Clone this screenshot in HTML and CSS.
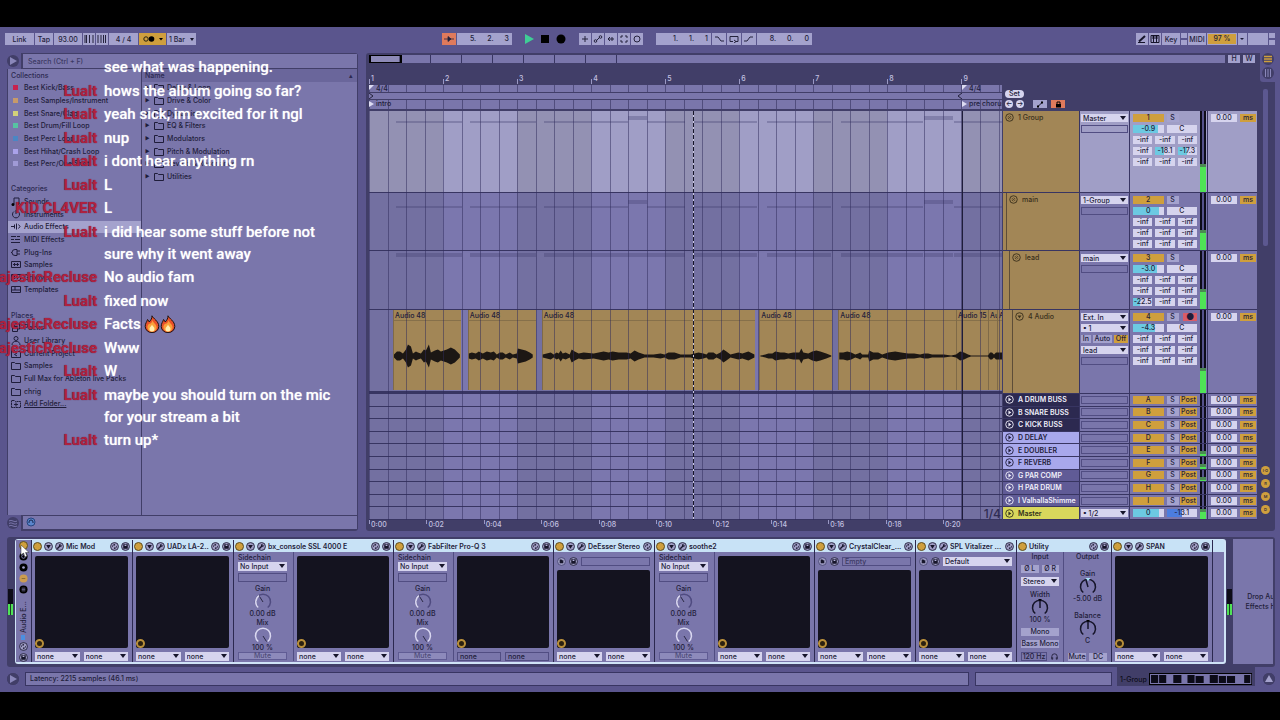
FILE: index.html
```
<!DOCTYPE html>
<html lang="en">
<head>
  <meta charset="UTF-8">
  <title>Live Set</title>
  <link rel="stylesheet" href="styles.css">
</head>
<body>

  <!-- shared icons -->
  <svg class="symbols" aria-hidden="true">
    <symbol id="i-folder" viewBox="0 0 10 9"><path d="M.5 8.5V1.5h3l1 1h5v6z" fill="none" stroke="currentColor"/></symbol>
    <symbol id="i-packs" viewBox="0 0 10 9"><path d="M1.5 3.5h5v5h-5zM3.5 3V1h5v5h-2" fill="none" stroke="currentColor"/></symbol>
    <symbol id="i-user" viewBox="0 0 10 9"><circle cx="5" cy="2.5" r="2" fill="none" stroke="currentColor"/><path d="M1 9c0-5 8-5 8 0" fill="none" stroke="currentColor"/></symbol>
    <symbol id="i-project" viewBox="0 0 10 9"><path d="M.5 8.5V1.5h3l1 1h5v6zM6 4L3.500 5.5 6 7" fill="none" stroke="currentColor"/></symbol>
    <symbol id="i-add" viewBox="0 0 10 9"><path d="M.5 8.5V1.5h3l1 1h5v6z" fill="none" stroke="currentColor" stroke-dasharray="2 .5"/><path d="M5 3.5v4M3 5.5h4" stroke="currentColor"/></symbol>
    <symbol id="i-note" viewBox="0 0 10 9"><path d="M3 7V1h5v5" fill="none" stroke="currentColor"/><circle cx="2" cy="7.5" r="1.5"/><circle cx="7" cy="6.5" r="1.5"/></symbol>
    <symbol id="i-dial" viewBox="0 0 10 9"><path d="M3 1.5a3.500 3.500 0 1 0 4 0M5 0v4" fill="none" stroke="currentColor"/></symbol>
    <symbol id="i-audio" viewBox="0 0 10 9"><path d="M0 4.5h3M3.5 2.5v4M5.500 1.5v6M7.5 2.5l1.500 2-1.500 2" fill="none" stroke="currentColor"/></symbol>
    <symbol id="i-midi" viewBox="0 0 10 9"><path d="M0 1.5h5M6 1.5h3M0 4.5h3M4 4.5h5M0 7.5h9" stroke="currentColor"/></symbol>
    <symbol id="i-plug" viewBox="0 0 10 9"><path d="M6 1.5H4a3 3 0 0 0 0 6h2zM6 3h3M6 6h3M0 4.5h1" fill="none" stroke="currentColor"/></symbol>
    <symbol id="i-sample" viewBox="0 0 10 9"><path d="M.5 1.5h9v6h-9zM3.5 3v3M6.5 3v3M2 4.5h6" fill="none" stroke="currentColor"/></symbol>
    <symbol id="i-template" viewBox="0 0 10 9"><path d="M.5 1.5h9v6h-9zM.5 5h9M4 1.5V5" fill="none" stroke="currentColor"/></symbol>
    <symbol id="i-fold" viewBox="0 0 10 10"><circle cx="5" cy="5" r="4.2" fill="none" stroke="currentColor"/><path d="M3 3.5l4 3M3 5.5l2 1.5M5 3l2 1.5" stroke="currentColor" stroke-width=".8"/></symbol>
    <symbol id="i-open" viewBox="0 0 10 10"><circle cx="5" cy="5" r="4.2" fill="none" stroke="currentColor"/><path d="M2.8 3.8h4.400L5 7z" fill="currentColor"/></symbol>
    <symbol id="i-closed" viewBox="0 0 10 10"><circle cx="5" cy="5" r="4.2" fill="none" stroke="currentColor"/><path d="M3.8 2.8v4.400L7 5z" fill="currentColor"/></symbol>
    <symbol id="i-down" viewBox="0 0 10 10"><circle cx="5" cy="5" r="4.4" fill="#9f9dc4" stroke="#25233d"/><path d="M2.4 3.2h5.200L5 7.600z" fill="#16152a"/></symbol>
    <symbol id="i-wrench" viewBox="0 0 10 10"><circle cx="5" cy="5" r="4.4" fill="#9f9dc4" stroke="#25233d"/><path d="M2.5 7.5l3-3" stroke="#16152a" stroke-width="1.5"/><path d="M7.6 3.6A1.600 1.600 0 1 1 6.2 2.2L6 3.8z" fill="#16152a"/></symbol>
    <symbol id="i-swap" viewBox="0 0 10 10"><circle cx="5" cy="5" r="4.4" fill="#9f9dc4" stroke="#25233d"/><path d="M2.6 5.6C2.500 3.8 3.8 2.6 5.600 3M7.4 4.4C7.5 6.2 6.2 7.4 4.4 7M5 2v2M5 6v2" fill="none" stroke="#25233d" stroke-width=".9"/></symbol>
    <symbol id="i-save" viewBox="0 0 10 10"><circle cx="5" cy="5" r="4.4" fill="#9f9dc4" stroke="#25233d"/><path d="M2.5 2.5h5v5h-5z" fill="#16152a"/><path d="M4 3h2v1.500H4z" fill="#b5b3dc"/></symbol>
    <symbol id="i-load" viewBox="0 0 10 10"><circle cx="5" cy="5" r="4.4" fill="#9f9dc4" stroke="#4a4775"/><path d="M3 2.8h2l.6.8H7V7H3z" fill="#16152a"/></symbol>
    <symbol id="i-fire" viewBox="0 0 16 18">
      <path d="M8 .8C9 3.5 14.800 6 14.800 11.500A6.300 6.300 0 0 1 8 17.500a6.300 6.300 0 0 1-6.800-6C1.200 8 3 7 3.500 4.500c1 .5 1.500 1.500 1.700 2.500C6.800 5.500 8.200 3 8 .8z" fill="#e8502a" stroke="#1c1210"/>
      <path d="M8.300 5c.3 2.500 4.300 4 4.300 7.500A4.500 4.500 0 0 1 8 16.800a4.500 4.500 0 0 1-4.600-4.500c0-1.800.9-2.600 1.500-3.500C7 9 8.200 7.500 8.300 5z" fill="#f9a13a"/>
      <path d="M8 9.500c.2 1.500 2.500 2.300 2.500 4.300A2.600 2.600 0 0 1 8 16.500a2.600 2.600 0 0 1-2.500-2.700C5.500 12 7.500 11.500 8 9.500z" fill="#ffefb0"/>
    </symbol>
  </svg>

  <div class="live">

    <header class="topbar">
      <div class="group tempo">
        <button class="w29">Link</button>
        <button class="w18">Tap</button>
        <input class="w28" aria-label="Tempo" value="93.00">
        <button class="w12" aria-label="Nudge down"><svg viewBox="0 0 10 8"><path d="M1 0v8M2.500 0v8M5.500 0v8M9 0v8" stroke="#25233d"/></svg></button>
        <button class="w12" aria-label="Nudge up"><svg viewBox="0 0 10 8"><path d="M1 0v8M4 0v8M6.500 0v8M8.500 0v8" stroke="#25233d"/></svg></button>
        <input class="w29" aria-label="Time signature" value="4 / 4">
        <button class="w27 on" aria-label="Metronome"><svg class="wide" viewBox="0 0 22 8"><circle cx="4" cy="4" r="2.2" fill="none" stroke="#25200f"/><circle cx="9.5" cy="4" r="2.8"/><path d="M17 3h4l-2 2.500z"/></svg></button>
        <span class="pick w29"><select aria-label="Quantization"><option>1 Bar</option></select></span>
      </div>

      <div class="transport">
        <div class="group">
          <button class="w14 follow" aria-label="Follow"><svg viewBox="0 0 10 8"><path d="M0 4h10M4 1.500l3 2.500-3 2.500z" stroke="#25233d" stroke-width=".8" fill="#25233d"/></svg></button>
          <div class="pos"><span>5.</span><span>2.</span><span>3</span></div>
        </div>
        <div class="play">
          <button aria-label="Play"><svg viewBox="0 0 10 10"><path d="M1 0v10l9-5z" fill="#3fce96"/></svg></button>
          <button aria-label="Stop"><svg viewBox="0 0 10 10"><path d="M1 1h8v8H1z"/></svg></button>
          <button aria-label="Record"><svg viewBox="0 0 10 10"><circle cx="5" cy="5" r="4.5"/></svg></button>
        </div>
        <div class="group edit">
          <button class="w12" aria-label="Overdub"><svg viewBox="0 0 10 8"><path d="M5 1v6M2 4h6" stroke="#25233d"/></svg></button>
          <button class="w12" aria-label="Automation arm"><svg viewBox="0 0 10 8"><path d="M3.500 5.500l3-3" stroke="#25233d"/><circle cx="2.500" cy="6" r="1.300" fill="none" stroke="#25233d"/><circle cx="7.500" cy="2" r="1.300" fill="none" stroke="#25233d"/></svg></button>
          <button class="w12" aria-label="Re-enable automation"><svg viewBox="0 0 10 8"><path d="M2 4h6M4 2L2 4l2 2M6 2v4" stroke="#25233d" fill="none"/></svg></button>
          <button class="w12" aria-label="Capture"><svg viewBox="0 0 10 8"><path d="M2 3V1h2M6 1h2v2M8 5v2H6M4 7H2V5" stroke="#25233d" fill="none"/></svg></button>
          <button class="w12" aria-label="Session record"><svg viewBox="0 0 10 8"><circle cx="5" cy="4" r="3" stroke="#25233d" fill="none"/></svg></button>
        </div>
        <div class="group">
          <div class="pos"><span>1.</span><span>1.</span><span>1</span></div>
          <button class="w14" aria-label="Punch in"><svg viewBox="0 0 10 8"><path d="M1 2h3l3 4h3" stroke="#25233d" fill="none"/></svg></button>
          <button class="w14" aria-label="Loop"><svg viewBox="0 0 10 8"><path d="M4 6.500H1v-5h8v5H6.500M5 5l2 1.500L5 8" stroke="#25233d" fill="none"/></svg></button>
          <button class="w14" aria-label="Punch out"><svg viewBox="0 0 10 8"><path d="M0 6h3l3-4h3" stroke="#25233d" fill="none"/></svg></button>
          <div class="pos"><span>8.</span><span>0.</span><span>0</span></div>
        </div>
      </div>

      <div class="group right">
        <button class="w12" aria-label="Draw mode"><svg viewBox="0 0 10 8"><path d="M2 6.500L8 1" stroke="#16152a" stroke-width="2"/><path d="M1 7.500h7" stroke="#16152a"/></svg></button>
        <button class="w12" aria-label="Computer keyboard"><svg viewBox="0 0 10 8"><path d="M1 .5h8v7H1zM3.500 0v7M6.500 0v7" stroke="#16152a" fill="none"/><path d="M3 0h1v4H3zM6 0h1v4H6z" stroke="#16152a"/></svg></button>
        <button class="w18">Key</button>
        <span class="leds"></span>
        <button class="w18">MIDI</button>
        <span class="cpu">97 %</span>
        <span class="more"></span>
        <span class="disk"></span>
        <span class="leds"></span>
      </div>
    </header>

    <main class="main">
      <section class="browser">
        <button class="round" aria-label="Hide browser"><svg viewBox="0 0 12 12"><path d="M3 2v8l7-4z" fill="#8a87ba"/></svg></button>
        <input class="search" aria-label="Search" placeholder="Search (Ctrl + F)">
        <div class="panes">
          <ul class="places" id="places"></ul>
          <ul class="files" id="files"></ul>
        </div>
        <button class="round" aria-label="Groove pool"><svg viewBox="0 0 12 12"><path d="M2 4c3-2 5 2 8 0M2 6.500c3-2 5 2 8 0M2 9c3-2 5 2 8 0" stroke="#7a76ab" fill="none"/></svg></button>
        <div class="preview"><svg viewBox="0 0 10 10"><circle cx="5" cy="5" r="4" fill="#5a86cc" stroke="#27447e"/><path d="M3 6V5a2 2 0 0 1 4 0v1" fill="none" stroke="#16254a"/></svg></div>
      </section>

      <section class="arrangement">
        <div class="sheet">
          <div class="overview">
            <div class="strip"><span class="window"></span></div>
            <button>H</button>
            <button>W</button>
          </div>

          <div class="ruler">
            <div class="bars" id="bars"></div>
            <div class="sig beats"><span class="flag">4/4</span><span class="flag at9">4/4</span></div>
            <div class="loop"><span class="brace"><svg viewBox="0 0 5 6"><path d="M0 0l4 3-4 3" fill="none" stroke="#25233d"/></svg><svg viewBox="0 0 5 6"><path d="M5 0L1 3l4 3" fill="none" stroke="#25233d"/></svg></span></div>
            <div class="locators beats"><span class="flag">intro</span><span class="flag at9">pre chorus</span></div>
          </div>
          <div class="setbar">
            <button class="set">Set</button>
            <div class="locs">
              <button class="dot" aria-label="Previous locator">←</button>
              <button class="dot" aria-label="Next locator">→</button>
              <button class="auto" aria-label="Automation mode"><svg viewBox="0 0 12 7"><path d="M4 5.500l4-4" stroke="#16152a"/><path d="M3 4.500h2v2H3zM7 .5h2v2H7z"/></svg></button>
              <button class="lock" aria-label="Lock envelopes"><svg viewBox="0 0 12 7"><path d="M4 3h5v3.500H4z"/><path d="M5 3V1h3v2" stroke="#000" fill="none"/></svg></button>
            </div>
          </div>

          <div class="lanes" id="lanes"></div>
          <div class="tracks" id="tracks"></div>
          <div class="times" id="times"></div>
        </div>

        <aside class="side">
          <div class="views">
            <button aria-label="Arrangement view"><svg viewBox="0 0 12 12"><circle cx="6" cy="6" r="6" fill="#413e68"/><path d="M2 3.500h8M2 6h8M2 8.500h8" stroke="#cf9f3d" stroke-width="1.5"/></svg></button>
            <button aria-label="Session view"><svg viewBox="0 0 12 12"><circle cx="6" cy="6" r="6" fill="#413e68"/><path d="M3.500 2v8M6 2v8M8.500 2v8" stroke="#8a87ba"/></svg></button>
          </div>
          <div class="scroll"></div>
          <div class="shows">
            <button>I·O</button>
            <button>R</button>
            <button>M</button>
            <button>D</button>
          </div>
        </aside>
      </section>
    </main>

    <section class="detail">
      <div class="meter"><i></i></div>
      <div class="chain">
        <div class="rack">
          <span class="led"></span>
          <svg viewBox="0 0 10 10"><circle cx="5" cy="5" r="4.5"/><circle cx="5" cy="5" r="2" fill="none" stroke="#8a87ba"/></svg>
          <svg viewBox="0 0 10 10"><circle cx="5" cy="5" r="4.5"/><circle cx="5" cy="5" r="1.5" fill="#a4a2cd"/></svg>
          <svg viewBox="0 0 10 10"><circle cx="5" cy="5" r="4.5" fill="#cc9c50"/><path d="M3 5h4" stroke="#8a6a30"/></svg>
          <svg viewBox="0 0 10 10"><circle cx="5" cy="5" r="4.5"/><path d="M3 3.500h4M3 5h4M3 6.500h4" stroke="#8a87ba" stroke-width=".7"/></svg>
          <span class="rack-name">Audio E...</span>
          <span class="chip"></span>
          <svg><use href="#i-swap"/></svg>
          <svg><use href="#i-save"/></svg>
        </div>
        <div class="devices" id="devices"></div>
      </div>
      <div class="meter"><i></i></div>
      <div class="drop"><p>Drop Audio<br>Effects Here</p></div>
    </section>

    <footer class="status">
      <button class="round" aria-label="Info view"><svg viewBox="0 0 12 12"><path d="M3 2v8l7-4z" fill="#8a87ba"/></svg></button>
      <div class="box">Latency: 2215 samples (46.1 ms)</div>
      <div class="box small"></div>
      <div class="mini">1-Group<svg viewBox="0 0 102 12" preserveAspectRatio="none"><path d="M0 0h102v12H0z"/><path d="M1 1h100v10H1z" fill="#7a76ab"/><path d="M2 2h7v8H2zM10 2h7v8h-7zM24 2h8v8h-8zM38 2h7v8h-7zM46 3h8v7h-8zM60 2h8v8h-8zM69 3h7v7h-7zM77 3h8v7h-8zM94 2h6v8h-6z" fill="#0c0b18"/></svg></div>
      <button class="round up" aria-label="Toggle detail view"><svg viewBox="0 0 12 12"><path d="M2 9h8L6 2z" fill="#a4a2cd"/></svg></button>
    </footer>

    <!-- stream chat overlay -->
    <div class="chat">
      <p><b></b><span>see what was happening.</span></p>
      <p><b>Lualt</b><span>hows the album going so far?</span></p>
      <p><b>Lualt</b><span>yeah sick, im excited for it ngl</span></p>
      <p><b>Lualt</b><span>nup</span></p>
      <p><b>Lualt</b><span>i dont hear anything rn</span></p>
      <p><b>Lualt</b><span>L</span></p>
      <p><b>KID CL4VER</b><span>L</span></p>
      <p><b>Lualt</b><span>i did hear some stuff before not sure why it went away</span></p>
      <p><b>MajesticRecluse</b><span>No audio fam</span></p>
      <p><b>Lualt</b><span>fixed now</span></p>
      <p><b>MajesticRecluse</b><span>Facts <svg><use href="#i-fire"/></svg><svg><use href="#i-fire"/></svg></span></p>
      <p><b>MajesticRecluse</b><span>Www</span></p>
      <p><b>Lualt</b><span>W</span></p>
      <p><b>Lualt</b><span>maybe you should turn on the mic for your stream a bit</span></p>
      <p><b>Lualt</b><span>turn up*</span></p>
    </div>

    <svg class="cursor" viewBox="0 0 9 13"><path d="M1 0v10l2.500-2L5 12l2-1-1.500-3.500H9z" fill="#fff" stroke="#333" stroke-width=".5"/></svg>
  </div>

  <script src="script.js"></script>
</body>
</html>
```

FILE: styles.css
```
* {
  box-sizing: border-box;
  margin: 0;
  padding: 0;
}

:root {
  --app: #5a558d;
  --panel: #7a76ab;
  --dark: #413e68;
  --line: #383562;
  --light: #a4a2cd;
  --field: #d6d4ee;
  --ink: #1f1d3a;
  --orange: #cf9f3d;
  --cyan: #6cc9e2;
  --bar: 11.7%;
}

body {
  background: #000;
  min-height: 100vh;
  padding: 27px 0 28px;
  display: flex;
  font-family: Inter, "Liberation Sans", sans-serif;
  font-size: 7px;
  font-weight: 500;
  line-height: 9px;
  color: var(--ink);
  overflow: hidden;
}

button, input, select {
  font: inherit;
  color: inherit;
  border: 0;
  border-radius: 0;
  background: none;
  appearance: none;
  min-width: 0;
}

ul { list-style: none; }

.symbols {
  position: absolute;
  width: 0;
  height: 0;
}

.live {
  position: relative;
  flex: 1;
  min-width: 0;
  background: var(--app);
  display: grid;
  grid-template-columns: minmax(0, 1fr);
  grid-template-rows: 26px 1fr 130px 25px;
  overflow: hidden;
}

/* drop-downs */
.pick {
  position: relative;
  display: block;
  background: var(--field);
  height: 9px;
  min-width: 0;
}
.pick select {
  display: block;
  width: 100%;
  height: 100%;
  padding-left: 2px;
}
.pick::after {
  content: "";
  position: absolute;
  right: 2px;
  top: 2px;
  border: 3px solid transparent;
  border-top: 4px solid #16152a;
  border-bottom: 0;
  pointer-events: none;
}

/* top bar */
.topbar {
  display: grid;
  grid-template-columns: 1fr auto 1fr;
  align-items: start;
  padding: 6px 5px 0;
}
.group {
  display: flex;
  gap: 1px;
}
.group button,
.group input,
.group .pick,
.group > span {
  height: 12px;
  background: var(--light);
  text-align: center;
}
.group svg {
  display: block;
  width: 10px;
  height: 8px;
  margin: auto;
}
.group svg.wide { width: 22px; }
.group .pick::after {
  top: 5px;
  border-width: 3px 2px 0;
}
.w12 { width: 12px; }
.w14 { width: 14px; }
.w18 { width: 18px; }
.w27 { width: 27px; }
.w28 { width: 28px; }
.w29 { width: 29px; }
.group .on { background: var(--orange); }
.group .follow { background: #df7a5c; }

.transport {
  display: flex;
  margin-right: 26px;
}
.pos {
  display: flex;
  justify-content: flex-end;
  gap: 11px;
  width: 55px;
  height: 12px;
  padding-right: 3px;
  line-height: 12px;
  background: var(--light);
}
.play {
  display: flex;
  gap: 6px;
  padding: 1px 13px 0 12px;
}
.play button {
  width: 10px;
  height: 10px;
}
.play svg {
  display: block;
  width: 10px;
  height: 10px;
}
.edit { margin-right: 13px; }
.right { justify-content: flex-end; }
.group .leds {
  width: 6px;
  background: linear-gradient(var(--light) 45%, var(--app) 45% 55%, var(--light) 55%);
}
.group .cpu {
  width: 30px;
  line-height: 10px;
  background: var(--orange);
  border: 1px solid var(--light);
}
.group .more {
  position: relative;
  width: 9px;
}
.more::after {
  content: "";
  position: absolute;
  left: 2px;
  top: 5px;
  border: 2px solid transparent;
  border-top-color: var(--ink);
}
.group .disk { width: 20px; }

.main {
  display: grid;
  grid-template-columns: 351px minmax(0, 1fr);
  gap: 8px;
  padding: 0 5px 0 7px;
  margin-bottom: 6px;
}

/* browser */
.browser {
  display: grid;
  grid-template-columns: 14px 1fr;
  grid-template-rows: 16px 1fr 15px;
  padding-bottom: 1px;
  background: var(--dark);
  border-radius: 3px;
}
.round {
  align-self: center;
  width: 12px;
  height: 12px;
  border-radius: 50%;
  background: var(--dark);
}
.browser .round {
  width: 14px;
  height: 16px;
  border-radius: 0;
  background: var(--app);
}
.round svg {
  display: block;
  width: 12px;
  height: 12px;
  border-radius: 50%;
  background: var(--dark);
}
.search,
.preview {
  margin: 1px 1px 1px 2px;
  background: var(--panel);
}
.search { padding-left: 5px; }
.search::placeholder { color: #3c3963; opacity: 1; }
.preview { padding: 1px 3px; }
.preview svg {
  display: block;
  width: 10px;
  height: 10px;
}
.panes {
  grid-column: 1 / 3;
  display: grid;
  grid-template-columns: 133px 1fr;
  gap: 1px;
  margin: 0 1px;
}
.panes ul {
  display: grid;
  grid-template-rows: repeat(35, minmax(0, 1fr));
  padding-bottom: 4px;
  background: var(--panel);
}
.panes li {
  display: flex;
  align-items: center;
  gap: 3px;
  padding-left: 3px;
  white-space: nowrap;
}
.panes li svg {
  width: 10px;
  height: 9px;
}
.panes li.sel { background: var(--light); }
.panes li.head { color: #2c2950; }
.panes li a { color: inherit; }
.swatch {
  width: 5px;
  height: 5px;
  margin: 0 3px 0 2px;
}
.files li.head {
  background: #6a669b;
  justify-content: space-between;
  padding-right: 4px;
}
.files .tri {
  width: 6px;
  font-size: 5px;
}

/* arrangement */
.arrangement {
  display: grid;
  grid-template-columns: minmax(0, 1fr) 18px;
  background: var(--dark);
  border-radius: 3px;
}
.sheet {
  display: grid;
  grid-template-columns: minmax(0, 1fr) 254px;
  grid-template-rows: 8px 48px minmax(0, 1fr) 11px;
  column-gap: 1px;
  padding: 2px 0 0 3px;
}
.overview {
  grid-column: 1 / 3;
  display: flex;
  gap: 3px;
  padding-right: 2px;
}
.overview .strip {
  flex: 1;
  background: repeating-linear-gradient(90deg, transparent 0 30px, var(--line) 30px 31px) 0 0 / 250px 100% no-repeat var(--panel);
}
.overview .window {
  display: block;
  width: 33px;
  height: 8px;
  border: 2px solid #000;
  border-width: 1px 2px;
  background: rgba(255, 255, 255, 0.15);
}
.overview button {
  width: 12px;
  height: 8px;
  line-height: 8px;
  background: var(--light);
}
.ruler {
  display: grid;
  grid-template-rows: 10px 7px 6px 9px;
  align-content: start;
  row-gap: 1px;
  padding-top: 11px;
  overflow: hidden;
}
.bars,
.times {
  display: flex;
  overflow: hidden;
  color: #c3c1e0;
}
.bars span {
  flex: 0 0 var(--bar);
  padding-left: 2px;
  line-height: 10px;
  background: linear-gradient(#9a98c4, #9a98c4) 0 100% / 1px 5px no-repeat;
}
.beats {
  position: relative;
  background:
    repeating-linear-gradient(90deg, rgba(40, 37, 80, 0.5) 0 1px, transparent 1px calc(var(--bar) / 4)),
    var(--panel);
}
.flag {
  position: absolute;
  left: 0;
  top: 0;
  padding-left: 7px;
  line-height: 8px;
  white-space: nowrap;
}
.flag::before {
  content: "";
  position: absolute;
  left: 0;
  top: 1px;
  border: 3px solid transparent;
  border-left: 5px solid #dddcf2;
}
.sig .flag::before {
  top: 0;
  border-width: 5px 5px 0 0;
  border-color: #dddcf2 transparent;
}
.at9 { left: 93.7%; }
.loop {
  background: var(--panel);
}
.brace {
  display: flex;
  justify-content: space-between;
  width: 93.7%;
  height: 6px;
}
.brace svg {
  width: 5px;
  height: 6px;
}
.setbar {
  padding: 27px 0 0 2px;
}
.set {
  display: block;
  width: 19px;
  height: 8px;
  line-height: 8px;
  border-radius: 4px;
  background: var(--field);
}
.locs {
  display: flex;
  align-items: center;
  gap: 3px;
  margin-top: 2px;
}
.locs button {
  width: 14px;
  height: 8px;
  background: var(--light);
}
.locs button.dot {
  width: 8px;
  border-radius: 50%;
  line-height: 8px;
  background: var(--field);
}
.locs button.auto { margin: 0 1px 0 6px; }
.locs button.lock { background: #df7a5c; }
.locs svg {
  display: block;
  width: 12px;
  height: 7px;
  margin: auto;
}

.lanes {
  position: relative;
  display: flex;
  flex-direction: column;
  background: repeating-linear-gradient(90deg, #7370a1 0 var(--bar), #7b77ae var(--bar) calc(var(--bar) * 2));
  overflow: hidden;
}
.lanes::after {
  content: "";
  position: absolute;
  inset: 0;
  background: repeating-linear-gradient(90deg, rgba(46, 42, 90, 0.5) 0 1px, transparent 1px calc(var(--bar) / 4));
  pointer-events: none;
}
.lane {
  position: relative;
  border-bottom: 1px solid var(--line);
}
.h82 { height: 82px; }
.h58 { height: 58px; }
.h59 { height: 59px; }
.h84 { height: 84px; }
.ret { flex: 1; min-height: 0; }
.lane.h82 {
  background: repeating-linear-gradient(90deg, #9391b3 0 var(--bar), #a09ec6 var(--bar) calc(var(--bar) * 2));
}
.lane.h84 { border-bottom-width: 3px; }
.seg {
  position: absolute;
  top: 10px;
  height: 2px;
  background: rgba(60, 57, 105, 0.3);
}
.seg.up { top: 5px; height: 4px; }
.lane.h58 .seg { top: 13px; }
.lane.h58 .seg.up { top: 7px; }
.lane.h59 .seg { top: 2px; height: 4px; }
.clip {
  position: absolute;
  top: 0;
  bottom: 1px;
  background: #a28656;
  border-left: 1px solid #7f6a48;
  overflow: hidden;
}
.clip span {
  display: block;
  height: 11px;
  padding-left: 1px;
  line-height: 11px;
  white-space: nowrap;
  border-bottom: 1px solid #86704a;
}
.wave {
  position: absolute;
  left: 0;
  top: 0;
  width: 100%;
  height: 81px;
}
.playhead {
  position: absolute;
  left: 51.2%;
  top: 0;
  bottom: 0;
  width: 1px;
  z-index: 1;
  background: repeating-linear-gradient(#16152a 0 4px, #c8c6e0 4px 6px);
}
.marker {
  position: absolute;
  left: 93.7%;
  top: 0;
  bottom: 0;
  width: 1px;
  background: #1f1d3a;
}
.grid-size {
  position: absolute;
  right: 1px;
  bottom: 0;
  font-size: 12px;
  line-height: 13px;
  color: #2f2c52;
}
.times span {
  flex: 0 0 9.07%;
  padding-left: 2px;
  line-height: 10px;
  white-space: nowrap;
  background: linear-gradient(#9a98c4, #9a98c4) 0 0 / 1px 4px no-repeat;
}

/* track headers */
.tracks {
  display: flex;
  flex-direction: column;
  background: var(--line);
}
.track {
  display: grid;
  grid-template-columns: 76px 49px 77px 49px;
  column-gap: 1px;
  border-bottom: 1px solid var(--line);
}
.track > div {
  min-width: 0;
  background: var(--panel);
}
.track.h82 > div { background: #a09ec6; }
.track .name {
  display: flex;
  gap: 4px;
  padding: 1px 2px;
  line-height: 11px;
  white-space: nowrap;
  overflow: hidden;
  background: #a28656 !important;
  color: #3a301c;
}
.track .name svg {
  flex: none;
  width: 9px;
  height: 9px;
  margin-top: 1px;
}
.track .name.in1 { padding-left: 6px; box-shadow: inset 3px 0 #a28656, inset 4px 0 #5d4d38; }
.track .name.in2 { padding-left: 9px; box-shadow: inset 6px 0 #a28656, inset 7px 0 #5d4d38; }
.track .name.in3 { padding-left: 12px; box-shadow: inset 9px 0 #a28656, inset 10px 0 #5d4d38; }
.io {
  display: flex;
  flex-direction: column;
  gap: 3px;
  padding: 3px 1px;
}
.io .pick { height: 8px; }
.slot {
  height: 8px;
  border: 1px solid #514d82;
}
.monitor {
  display: flex;
  gap: 2px;
}
.monitor button {
  flex: 1 0 auto;
  height: 8px;
  line-height: 8px;
  background: var(--light);
}
.monitor .on { background: var(--orange); }
.mix {
  display: grid;
  grid-template-columns: 64px 6px;
  gap: 3px;
  padding-left: 3px;
}
.cells {
  display: grid;
  grid-template-columns: repeat(6, minmax(0, 1fr));
  grid-auto-rows: 8px;
  gap: 3px;
  padding-top: 3px;
}
.cells > * {
  grid-column: span 2;
  height: 8px;
  line-height: 8px;
  text-align: center;
  background: var(--field);
}
.cells .half { grid-column: span 3; }
.cells .num,
.ret .num {
  grid-column: span 3;
  background: var(--orange);
}
.cells .solo,
.ret .solo {
  grid-column: 4 / 5;
  width: 12px;
  background: var(--light);
}
.cells .arm {
  grid-column: 5 / 7;
  width: 14px;
  justify-self: end;
  background: #d95c68;
  font-size: 9px;
}
.fill {
  background: linear-gradient(90deg, var(--cyan) var(--f), var(--field) var(--f)) !important;
}
.fill.blue {
  background: linear-gradient(90deg, #4c7de0 var(--f), var(--field) var(--f)) !important;
}
.level {
  display: flex;
  align-items: flex-end;
  background: linear-gradient(90deg, #0d0c18 0 2px, #55528a 2px 4px, #0d0c18 4px);
}
.level i {
  width: 100%;
  border-top: 3px solid #4b8a52;
  background: #4fe356;
}
.delay {
  display: grid;
  grid-template-columns: 26px 16px;
  gap: 3px;
  align-content: start;
  padding: 3px 0 0 3px;
}
.delay > * {
  height: 8px;
  line-height: 8px;
  text-align: center;
  background: var(--field);
}
.delay button { background: var(--orange); }

.track.ret .name {
  align-items: center;
  padding: 0 2px;
  font-weight: 600;
  color: #f0effa;
}
.track.ret .name svg { margin: 0; }
.track.ret .name.dark { background: #2c2950 !important; }
.track.ret .name.pale { background: #a8a8ec !important; color: var(--ink); }
.track.ret .name.mid { background: #605b96 !important; }
.track.ret .name.master { background: #d8d75c !important; color: #33321a; }
.track.ret .io,
.track.ret .cells,
.track.ret .delay {
  padding-top: 0;
  padding-bottom: 0;
  align-content: center;
}
.track.ret .io { display: grid; grid-template-columns: 1fr; }
.ret .cells .post {
  grid-column: 5 / 7;
  width: 17px;
  justify-self: end;
  background: var(--orange);
}

.side {
  display: flex;
  flex-direction: column;
  align-items: center;
}
.views {
  align-self: stretch;
  height: 29px;
  margin-left: 3px;
  background: var(--app);
  border-radius: 0 0 0 3px;
}
.views button {
  display: block;
  width: 12px;
  height: 12px;
  margin: 0 auto 2px;
}
.views svg { display: block; }
.scroll {
  width: 5px;
  height: 157px;
  margin: 7px 1px 0 0;
  background: #5c5890;
  border-radius: 2px;
}
.shows {
  display: flex;
  flex-direction: column;
  gap: 4px;
  margin: auto 1px 17px 0;
}
.shows button {
  width: 9px;
  height: 9px;
  border-radius: 50%;
  background: var(--orange);
  font-size: 4px;
  line-height: 9px;
}

/* device chain */
.detail {
  display: flex;
  margin: 0 5px 0 7px;
  padding: 2px 2px 3px 0;
  background: var(--dark);
  border-radius: 3px;
  overflow: hidden;
}
.detail > .meter {
  flex: none;
  width: 5px;
  height: 26px;
  margin: 50px 1px 0;
  background: #0d0c18;
  display: flex;
  align-items: flex-end;
}
.meter i {
  width: 100%;
  height: 11px;
  background: linear-gradient(90deg, #4fe356 0 2px, #1d3f24 2px 3px, #4fe356 3px);
}
.detail > .meter:first-child { margin: 50px 2px 0 1px; }
.chain {
  flex: none;
  display: flex;
  border: 1px solid #cfe3f7;
  border-width: 1px 2px 2px 1px;
  border-radius: 3px;
  background: linear-gradient(#c8e2f6 12px, var(--panel) 12px);
}
.rack {
  flex: none;
  width: 15px;
  display: flex;
  flex-direction: column;
  align-items: center;
  gap: 2px;
  padding: 1px 1px 0 0;
  background: var(--panel);
}
.rack svg {
  flex: none;
  width: 9px;
  height: 9px;
}
.rack-name {
  flex: 1;
  writing-mode: vertical-rl;
  transform: rotate(180deg);
  white-space: nowrap;
}
.chip {
  width: 4px;
  height: 5px;
  background: #4c8fe0;
}
.led {
  flex: none;
  width: 9px;
  height: 9px;
  border-radius: 50%;
  background: var(--orange);
  border: 1px solid #5d4d20;
}
.devices {
  flex: 1;
  display: flex;
}
.device {
  flex: none;
  width: 101px;
  display: flex;
  flex-direction: column;
  border-left: 1px solid #2c2950;
}
.device.wide { width: 160px; }
.device.util { width: 95px; }
.device.end { width: 12px; }
.title {
  display: flex;
  align-items: center;
  gap: 2px;
  height: 12px;
  padding: 0 2px 0 1px;
  background: #c8e2f6;
}
.title svg,
.preset svg {
  flex: none;
  width: 9px;
  height: 9px;
}
.title b {
  flex: 1;
  font-weight: 600;
  white-space: nowrap;
  overflow: hidden;
}
.body {
  flex: 1;
  display: flex;
  background: var(--panel);
}
.panel {
  flex: 1;
  min-width: 0;
  display: flex;
  flex-direction: column;
  gap: 4px;
  padding: 4px 4px 1px 3px;
}
.preset {
  display: flex;
  align-items: center;
  gap: 3px;
  height: 10px;
}
.preset > div {
  flex: 1;
  height: 9px;
  padding-left: 2px;
  border: 1px solid #514d82;
  line-height: 7px;
  color: #3c3963;
}
.preset > .pick { flex: 1; }
.screen {
  flex: 1;
  display: flex;
  align-items: flex-end;
  background: #14131f;
  border-radius: 2px;
}
.screen i {
  width: 9px;
  height: 9px;
  border: 2px solid #b98f3a;
  border-radius: 50%;
  background: #2c2110;
}
.pair {
  display: grid;
  grid-template-columns: 1fr 1fr;
  gap: 4px;
}
.off .pick {
  background: none;
  border: 1px solid #514d82;
}
.off .pick::after { display: none; }
.off select { line-height: 7px; }
.sidebox {
  width: 60px;
  padding: 1px 6px 0 4px;
  border-right: 1px solid #514d82;
  margin-bottom: 1px;
}
.sidebox .slot {
  height: 9px;
  margin: 2px 0;
}
.knob {
  display: block;
  text-align: center;
  line-height: 9px;
  white-space: nowrap;
}
.knob svg {
  display: block;
  width: 18px;
  height: 16px;
  margin: 0 auto;
}
.btn {
  display: block;
  width: 100%;
  height: 8px;
  line-height: 8px;
  text-align: center;
  background: var(--light);
  white-space: nowrap;
}
.sidebox .btn {
  background: #8d8abb;
  border: 1px solid #605c94;
  line-height: 6px;
  color: #4d4a78;
}
.util .col {
  display: flex;
  flex-direction: column;
  justify-content: space-between;
  padding: 0 4px 1px;
  text-align: center;
}
.util .col:first-child {
  width: 47px;
  border-right: 1px solid #514d82;
}
.util .col:last-child { flex: 1; }
.two {
  display: flex;
  justify-content: space-between;
  gap: 3px;
}
.hz {
  flex: 1;
  border: 1px solid #514d82;
  line-height: 7px;
}
.two svg {
  width: 9px;
  height: 9px;
}
.drop {
  flex: 1;
  min-width: 0;
  padding-top: 53px;
  background: var(--panel);
  overflow: hidden;
}
.drop p {
  width: 66px;
  text-align: center;
  line-height: 10px;
}

/* status bar */
.status {
  display: flex;
  gap: 5px;
  padding: 5px 5px 6px 7px;
}
.status .box {
  flex: 1;
  margin-left: 1px;
  padding: 1px 4px;
  line-height: 10px;
  background: var(--panel);
  border: 1px solid var(--line);
}
.status .small { flex: 0 0 137px; }
.mini {
  display: flex;
  align-items: center;
  gap: 2px;
  width: 138px;
  margin-top: -5px;
  padding: 5px 3px 0 3px;
  background: var(--dark);
  color: #0d0c18;
}
.mini svg {
  flex: 1;
  height: 12px;
}
.status .up { margin-left: 3px; }

/* chat */
.chat {
  position: absolute;
  left: 0;
  top: 29px;
  width: 336px;
  height: 395px;
  display: flex;
  flex-direction: column;
  justify-content: space-between;
  font: 500 15px/22px Roboto, sans-serif;
  color: #fff;
}
.chat p {
  display: grid;
  grid-template-columns: 97px 1fr;
  gap: 7px;
}
.chat b {
  display: flex;
  justify-content: flex-end;
  font-weight: 700;
  color: #b0213f;
  text-shadow: 0 0 1px #5a1230;
}
.chat span { text-shadow: 0 0 1px rgba(255, 255, 255, 0.6); }
.chat svg {
  width: 16px;
  height: 18px;
  vertical-align: -4px;
}

.cursor {
  position: absolute;
  left: 20px;
  top: 518px;
  width: 9px;
  height: 13px;
}
```

FILE: script.js
```
const use = (id) => `<svg><use href="#i-${id}"/></svg>`;
const pick = (label, value) =>
  `<span class="pick"><select aria-label="${label}"><option>${value}</option></select></span>`;

// browser
const places = [
  ['head', 'Collections'],
  ['#c8214f', 'Best Kick/Bass'], ['#c79a6a', 'Best Samples/Instrument'], ['#d2d27a', 'Best Snare/Clap'],
  ['#57c3a2', 'Best Drum/Fill Loop'], ['#4b86c4', 'Best Perc Loop'], ['#aaa2ea', 'Best Hihat/Crash Loop'],
  ['#a09ad6', 'Best Perc/One Shot'],
  null,
  ['head', 'Categories'],
  ['note', 'Sounds'], ['dial', 'Instruments'], ['audio', 'Audio Effects'], ['midi', 'MIDI Effects'],
  ['plug', 'Plug-Ins'], ['sample', 'Samples'], ['sample', 'Grooves'], ['template', 'Templates'],
  null,
  ['head', 'Places'],
  ['packs', 'Packs'], ['user', 'User Library'], ['project', 'Current Project'], ['folder', 'Samples'],
  ['folder', 'Full Max for Ableton  live Packs'], ['folder', 'chrig'], ['add', 'Add Folder...'],
];
document.getElementById('places').innerHTML = places.map((p) => {
  if (!p) return '<li></li>';
  const [kind, text] = p;
  if (kind === 'head') return `<li class="head">${text}</li>`;
  if (kind[0] === '#') return `<li><i class="swatch" style="background:${kind}"></i>${text}</li>`;
  if (kind === 'add') return `<li>${use(kind)}<a href="#">${text}</a></li>`;
  return `<li class="${text === 'Audio Effects' ? 'sel' : ''}">${use(kind)}${text}</li>`;
}).join('');

const folders = ['Delay &amp; Loop', 'Drive &amp; Color', 'Dynamics', 'EQ &amp; Filters', 'Modulators',
  'Pitch &amp; Modulation', 'Reverb &amp; Resonance', 'Utilities'];
document.getElementById('files').innerHTML = '<li class="head">Name<span>▴</span></li>' +
  folders.map((f) => `<li><span class="tri">▶</span>${use('folder')}${f}</li>`).join('');

// rulers
document.getElementById('bars').innerHTML =
  [1, 2, 3, 4, 5, 6, 7, 8, 9].map((n) => `<span>${n}</span>`).join('');
document.getElementById('times').innerHTML =
  ['0:00', '0:02', '0:04', '0:06', '0:08', '0:10', '0:12', '0:14', '0:16', '0:18', '0:20']
    .map((t) => `<span>${t}</span>`).join('');

// lanes: positions are on a 634 unit wide timeline
const W = 634;
const place = (from, to) => `left:${(from / W * 100).toFixed(2)}%;width:${((to - from) / W * 100).toFixed(2)}%`;

const segs = [[27, 93], [101, 167], [175, 259], [259, 278, 1], [278, 317], [325, 389], [399, 463],
  [473, 555], [556, 585, 1], [586, 634]]
  .map(([a, b, up]) => `<i class="seg ${up ? 'up' : ''}" style="${place(a, b)}"></i>`).join('');

const clips = [[24, 92, 'Audio 48'], [99, 167, 'Audio 48'], [173, 387, 'Audio 48'], [391, 464, 'Audio 48'],
  [470, 588, 'Audio 48'], [588, 620, 'Audio 15'], [620, 629, 'Au'], [629, 634, 'Au']]
  .map(([a, b, name]) => `<div class="clip" style="${place(a, b)}"><span>${name}</span></div>`).join('');

const peaks = [
  [25, 1, 28, 4, 31, 4, 34, 2, 37, 6, 39, 11, 42, 9, 44, 2, 47, 4, 49, 3, 52, 2, 55, 6, 57, 5, 60, 11, 62, 3, 66, 5,
    69, 6, 72, 4, 75, 5, 78, 6, 82, 8, 86, 6, 88, 4, 91, 1],
  [100, 2, 103, 3, 107, 2, 110, 4, 114, 2, 118, 4, 122, 3, 125, 4, 128, 1, 131, 3, 134, 3, 137, 1, 141, 3, 144, 1,
    148, 2, 149, 7, 153, 6, 157, 5, 161, 3, 164, 1],
  [174, 1, 178, 2, 182, 3, 185, 1, 188, 3, 190, 2, 192, 5, 194, 2, 197, 3, 199, 2, 201, 1, 203, 6, 206, 4, 210, 2,
    215, 3, 225, 2, 235, 4, 240, 3, 244, 4, 250, 3, 258, 3, 262, 2, 266, 5, 270, 3, 276, 1, 285, 1, 292, 2, 296, 1,
    300, 3, 306, 3, 312, 1, 322, 1, 326, 2, 330, 3, 335, 2, 338, 1, 340, 3, 345, 3, 348, 1, 352, 3, 355, 6, 358, 4,
    362, 1, 366, 2, 370, 3, 374, 2, 380, 4, 386, 1],
  [392, 0, 397, 1, 400, 2, 404, 2, 407, 4, 412, 3, 416, 3, 420, 2, 425, 3, 431, 3, 433, 7, 435, 3, 440, 2, 444, 4,
    448, 5, 452, 4, 458, 2, 463, 0],
  [471, 3, 475, 3, 479, 4, 483, 3, 487, 1, 490, 2, 492, 3, 494, 1, 500, 1, 501, 5, 505, 3, 510, 3, 514, 1, 520, 3,
    527, 4, 533, 3, 540, 2, 546, 2, 552, 1, 556, 2, 560, 2, 564, 1, 570, 1, 576, 1, 583, 0, 588, 1, 592, 4, 596, 3,
    600, 1, 603, 0, 620, 0, 622, 3, 624, 3, 626, 1, 628, 3, 634, 3],
];
const wave = peaks.map((p) => {
  const top = [];
  const bottom = [];
  for (let i = 0; i < p.length; i += 2) {
    top.push(`${p[i]} ${45.6 - p[i + 1]}`);
    bottom.unshift(`${p[i]} ${46.4 + p[i + 1]}`);
  }
  return `<path d="M${top.concat(bottom).join('L')}z" fill="#1c1714"/>`;
}).join('');

document.getElementById('lanes').innerHTML =
  `<div class="lane h82">${segs}</div><div class="lane h58">${segs}</div><div class="lane h59">${segs}</div>` +
  `<div class="lane h84">${clips}<svg class="wave" viewBox="0 0 ${W} 81" preserveAspectRatio="none">${wave}</svg></div>` +
  '<div class="lane ret"></div>'.repeat(10) +
  '<span class="marker"></span><span class="playhead"></span><span class="grid-size">1/4</span>';

// track headers
const cell = (v, fill, cls = '') => fill
  ? `<input class="${cls} fill" style="--f:${fill}%" aria-label="Level" value="${v}">`
  : `<input class="${cls}" aria-label="Level" value="${v}">`;
const delay = '<div class="delay"><input aria-label="Track delay" value="0.00"><button>ms</button></div>';

const tracks = [
  { h: 'h82', name: '1 Group', to: 'Master', vol: '-0.9', f: 82, meter: 35, sends: { 4: ['-18.1', 45], 5: ['-17.3', 50] } },
  { h: 'h58', name: 'main', to: '1-Group', vol: '0', f: 84, meter: 35, sends: {} },
  { h: 'h59', name: 'lead', to: 'main', vol: '-3.0', f: 76, meter: 34, sends: { 6: ['-22.5', 35] } },
  { h: 'h84', name: '4 Audio', vol: '-4.3', f: 72, meter: 30, arm: true, sends: {} },
];
const trackRows = tracks.map((t, i) => {
  let sends = '';
  for (let n = 0; n < 9; n++) sends += cell(...(t.sends[n] || ['-inf']));
  const io = t.arm
    ? pick('Input', 'Ext. In') + pick('Channel', '▪ 1') +
      '<div class="monitor"><button>In</button><button>Auto</button><button class="on">Off</button></div>' +
      pick('Output', 'lead') + '<div class="slot"></div>'
    : pick('Output', t.to) + '<div class="slot"></div>';
  return `<div class="track ${t.h}">
    <div class="name in${i}">${use(t.arm ? 'open' : 'fold')}${t.name}</div>
    <div class="io">${io}</div>
    <div class="mix"><div class="cells">
      <button class="num">${i + 1}</button><button class="solo">S</button>${t.arm ? '<button class="arm" aria-label="Arm">●</button>' : ''}
      ${cell(t.vol, t.f, 'half')}${cell('C', 0, 'half')}${sends}
    </div><div class="level"><i style="height:${t.meter}%"></i></div></div>
    ${delay}
  </div>`;
}).join('');

const returns = [['A', 'DRUM BUSS', 'dark', 0], ['B', 'SNARE BUSS', 'dark', 0], ['C', 'KICK BUSS', 'dark', 0],
  ['D', 'DELAY', 'pale', 0], ['E', 'DOUBLER', 'pale', 40], ['F', 'REVERB', 'pale', 40],
  ['G', 'PAR COMP', 'mid', 40], ['H', 'PAR DRUM', 'mid', 0], ['I', 'ValhallaShimme', 'mid', 0]];
const returnRows = returns.map(([id, name, tone, level]) => `<div class="track ret">
    <div class="name ${tone}">${use('closed')}${id} ${name}</div>
    <div class="io"><div class="slot"></div></div>
    <div class="mix"><div class="cells"><button class="num">${id}</button><button class="solo">S</button><button class="post">Post</button></div>
      <div class="level">${level ? `<i style="height:${level}%"></i>` : ''}</div></div>
    ${delay}
  </div>`).join('');

const masterRow = `<div class="track ret">
    <div class="name master">${use('closed')}Master</div>
    <div class="io">${pick('Cue', '▪ 1/2')}</div>
    <div class="mix"><div class="cells">${cell('0', 84, 'half')}${cell('-13.1', 50, 'half blue')}</div>
      <div class="level"><i style="height:90%"></i></div></div>
    ${delay}
  </div>`;
document.getElementById('tracks').innerHTML = trackRows + returnRows + masterRow;

// devices
const knobs = {
  gain: { ring: '#4f4b80', hand: 'M9 9L5.5 3.5', width: 0.8,
    extra: '<path d="M4.3 14.5A7.5 7.5 0 0 1 5 2.7" fill="none" stroke="#d9d7f0" stroke-width="1.5"/>' },
  mix: { ring: '#d9d7f0', hand: 'M9 9l3.5 5.5', width: 0.8, extra: '' },
  dark: { ring: '#16152a', hand: 'M9 9V2', width: 1.5, extra: '<path d="M7 0h4L9 2z"/>' },
  tilt: { ring: '#16152a', hand: 'M9 9L7 2', width: 1.5, extra: '<path d="M6.5 0h5L9 3z" fill="#a8def5"/>' },
};
function knob(label, value, kind) {
  const k = knobs[kind];
  return `<div class="knob">${label}<svg viewBox="0 0 18 16">
    <path d="M4.3 14.5A7.5 7.5 0 1 1 13.7 14.5" fill="none" stroke="${k.ring}" stroke-width="1.5"/>
    ${k.extra}<path d="${k.hand}" stroke="#16152a" stroke-width="${k.width}"/>
  </svg>${value}</div>`;
}

const sidebox = `<div class="sidebox">Sidechain${pick('Sidechain', 'No Input')}<div class="slot"></div>
  ${knob('Gain', '0.00 dB', 'gain')}${knob('Mix', '100 %', 'mix')}<button class="btn">Mute</button></div>`;

const devices = [
  { name: 'Mic Mod' }, { name: 'UADx LA-2...' }, { name: 'bx_console SSL 4000 E', side: true },
  { name: 'FabFilter Pro-Q 3', side: true, off: true }, { name: 'DeEsser Stereo', preset: '' },
  { name: 'soothe2', side: true }, { name: 'CrystalClear_...', preset: 'Empty' },
  { name: 'SPL Vitalizer ...', preset: 'Default' }, { name: 'Utility', util: true }, { name: 'SPAN' },
];

const utilBody = `<div class="col"><div>Input</div>
    <div class="two"><button class="btn">Ø L</button><button class="btn">Ø R</button></div>
    ${pick('Channel mode', 'Stereo')}${knob('Width', '100 %', 'dark')}
    <button class="btn">Mono</button><button class="btn">Bass Mono</button>
    <div class="two"><span class="hz">120 Hz</span><svg viewBox="0 0 10 10"><path d="M2 7V5a3 3 0 0 1 6 0v2M2 6v2h1V6M8 6v2H7V6" fill="none" stroke="#25233d"/></svg></div></div>
  <div class="col"><div>Output</div>${knob('Gain', '-5.00 dB', 'tilt')}${knob('Balance', 'C', 'dark')}
    <div class="two"><button class="btn">Mute</button><button class="btn">DC</button></div></div>`;

document.getElementById('devices').innerHTML = devices.map((d) => {
  const hasPreset = d.preset !== undefined;
  const preset = !hasPreset ? '' : `<div class="preset">${use('load')}${use('save')}` +
    (d.preset === 'Default' ? pick('Preset', d.preset) : `<div>${d.preset}</div>`) + '</div>';
  const body = d.util ? utilBody : `${d.side ? sidebox : ''}<div class="panel ${hasPreset ? 'presets' : ''}">${preset}
      <div class="screen"><i></i></div>
      <div class="pair ${d.off ? 'off' : ''}">${pick('X parameter', 'none')}${pick('Y parameter', 'none')}</div></div>`;
  return `<article class="device ${d.side ? 'wide' : ''} ${d.util ? 'util' : ''}">
    <div class="title"><span class="led"></span>${d.util ? '' : use('down') + use('wrench')}<b>${d.name}</b>${use('swap')}${hasPreset ? '' : use('save')}</div>
    <div class="body">${body}</div></article>`;
}).join('') + '<article class="device end"></article>';
```
